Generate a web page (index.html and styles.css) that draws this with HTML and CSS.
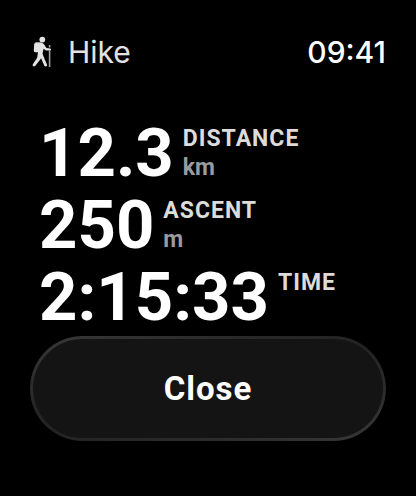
FILE: index.html
```html
<!DOCTYPE html>
<html lang="en">
<head>
    <meta charset="UTF-8">
    <meta name="viewport" content="width=device-width, initial-scale=1.0">
    <title>Hike</title>
    <link rel="stylesheet" href="styles.css">
</head>
<body>
    <header class="status-bar">
        <h1 class="title">
            <svg class="hiker" viewBox="0 0 24 32" aria-hidden="true">
                <circle cx="10.3" cy="3.6" r="2.9"/>
                <path d="M4.6 6.2 Q2.4 6.2 2.2 8.2 L1.8 14.4 Q1.8 16.3 3.6 16.3 L6.6 16.3 L8.4 6.6 Z"/>
                <path d="M6 7.4 Q9.6 5.4 12 8.2 L14.4 12 L18.4 12.6 Q19.6 13.4 18.6 14.6 L14 14.4 L11.6 12.8 L10.6 17.3 Q10.4 20.2 8.8 22.7 L3.4 29.8 Q2 31 .9 30 Q.2 29.2 1 28 L5.2 21.8 L6 16 Z"/>
                <path class="leg" d="M9.4 19 L11.4 24 L13.6 29"/>
                <path class="pole" d="M17.6 9 L17.6 11.4 M17.6 14 L17.6 31"/>
            </svg>
            Hike
        </h1>
        <time class="clock">09:41</time>
    </header>

    <main>
        <dl class="stats">
            <div class="stat">
                <dt>Distance</dt>
                <dd class="value">12.3</dd>
                <dd class="unit">km</dd>
            </div>
            <div class="stat">
                <dt>Ascent</dt>
                <dd class="value">250</dd>
                <dd class="unit">m</dd>
            </div>
            <div class="stat">
                <dt>Time</dt>
                <dd class="value">2:15:33</dd>
            </div>
        </dl>
        <button type="button" class="close-button">Close</button>
    </main>
</body>
</html>
```

FILE: styles.css
```css
* {
    box-sizing: border-box;
}

body {
    margin: 0;
    padding: 32px 30px;
    background-color: #000000;
    color: #ffffff;
    font-family: Inter, "Liberation Sans", sans-serif;
}

.status-bar {
    display: flex;
    justify-content: space-between;
    align-items: center;
    height: 40px;
}

.title {
    display: flex;
    align-items: center;
    gap: 12px;
    margin: 0;
    color: #e3e3e3;
    font-size: 30px;
    font-weight: 400;
}

.hiker {
    width: 24px;
    height: 32px;
    margin-left: 2px;
    fill: #e3e3e3;
}

.leg {
    fill: none;
    stroke: #e3e3e3;
    stroke-width: 3;
    stroke-linecap: round;
    stroke-linejoin: round;
}

.pole {
    fill: none;
    stroke: #a0a0a0;
    stroke-width: 1.6;
}

.clock {
    font-size: 30px;
    font-weight: 500;
}

.stats {
    margin: 44px 0 0;
    padding-left: 9px;
    font-family: Roboto, "Liberation Sans", sans-serif;
}

/* big number on the left, label and unit stacked beside it */
.stat {
    display: grid;
    grid-template-columns: auto 1fr;
    grid-template-rows: 29px 29px;
    column-gap: 9px;
    height: 72px;
    padding-top: 8px;
    font-size: 23px;
    font-weight: 700;
    line-height: 29px;
    letter-spacing: 1px;
}

.stat dt {
    grid-column: 2;
    color: #dcdcdc;
    text-transform: uppercase;
}

.stat dd {
    margin: 0;
}

.stat .value {
    grid-column: 1;
    grid-row: 1 / 3;
    font-size: 67px;
    line-height: 58px;
    letter-spacing: normal;
}

.stat .unit {
    grid-column: 2;
    color: #9b9b9b;
    letter-spacing: normal;
}

.close-button {
    display: block;
    width: 100%;
    height: 105px;
    margin-top: 4px;
    border: 3px solid transparent;
    border-radius: 53px;
    background: linear-gradient(#141414, #141414) padding-box,
                linear-gradient(to bottom right, #383838, #292929 30%, #232323 50%, #292929 70%, #383838) border-box;
    color: #ffffff;
    font-family: Roboto, "Liberation Sans", sans-serif;
    font-size: 33px;
    font-weight: 700;
    letter-spacing: 1px;
    cursor: pointer;
}
```
